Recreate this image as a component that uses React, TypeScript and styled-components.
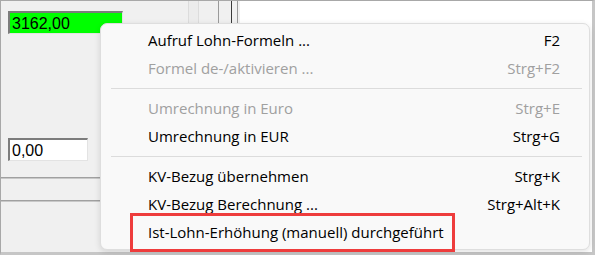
import React from 'react';
import styled, { createGlobalStyle } from 'styled-components';

const GlobalStyle = createGlobalStyle`
  html, body {
    margin: 0;
    padding: 0;
    background: #ffffff;
  }
  body {
    font-family: "Liberation Sans", Arial, sans-serif;
  }
`;

const Frame = styled.div`
  position: relative;
  width: 595px;
  height: 255px;
  box-sizing: border-box;
  border-top: 1px solid #a8a8a8;
  border-left: 1px solid #a8a8a8;
  border-right: 3px solid #c6c6c6;
  border-bottom: 3px solid #c6c6c6;
  display: flex;
  background: #ffffff;
`;

const FormPane = styled.div`
  width: 187px;
  background: #f0f0f0;
  display: flex;
  flex-direction: column;
`;

const Field = styled.div<{ $green?: boolean; $width: number; $top: number }>`
  box-sizing: border-box;
  width: ${(p) => p.$width}px;
  height: 23px;
  margin: ${(p) => p.$top}px 0 0 7px;
  padding: 1px 0 0 2px;
  background: ${(p) => (p.$green ? '#00ff00' : '#ffffff')};
  border-top: 2px solid #7c7c7c;
  border-left: 2px solid #7c7c7c;
  border-right: 1px solid #e3e3e3;
  border-bottom: 1px solid #e3e3e3;
  font-size: 16px;
  line-height: 19px;
  color: #000;
`;

const Rule = styled.div<{ $top: number }>`
  margin-top: ${(p) => p.$top}px;
  border-top: 1px solid #a0a0a0;
  border-bottom: 1px solid #c8c8c8;
`;

const Splitter = styled.div`
  width: 52px;
  display: flex;
  background: #f0f0f0;
`;

const SplitCol = styled.div<{ $w: number; $line?: string; $bg?: string }>`
  width: ${(p) => p.$w}px;
  box-sizing: border-box;
  background: ${(p) => p.$bg || '#f0f0f0'};
  border-left: ${(p) => (p.$line ? `1px solid ${p.$line}` : 'none')};
`;

const Canvas = styled.div`
  flex: 1;
  background: #ffffff;
`;

const Menu = styled.div`
  position: absolute;
  left: 99px;
  top: 22px;
  width: 490px;
  height: 227px;
  box-sizing: border-box;
  padding: 2px 4px;
  background: #f9f9f9;
  border: 1px solid #dedede;
  border-radius: 7px;
  box-shadow: 0 2px 6px rgba(0, 0, 0, 0.12);
  font-family: "Open Sans", "Noto Sans", sans-serif;
  font-size: 15px;
`;

const Item = styled.div<{ $disabled?: boolean }>`
  position: relative;
  height: 28px;
  display: flex;
  align-items: center;
  justify-content: space-between;
  padding: 0 25px 0 43px;
  color: ${(p) => (p.$disabled ? '#a0a0a0' : '#000000')};
  white-space: nowrap;
`;

const Separator = styled.div`
  height: 12px;
  display: flex;
  align-items: center;
  padding: 0 3px 0 6px;
  &::after {
    content: '';
    flex: 1;
    border-top: 1px solid #dcdcdc;
  }
`;

const Highlight = styled.div`
  position: absolute;
  left: 25px;
  top: -5px;
  width: 325px;
  height: 39px;
  box-sizing: border-box;
  border: 3px solid #ee3c3c;
  pointer-events: none;
`;

type Entry =
  | { kind: 'item'; label: string; shortcut?: string; disabled?: boolean; marked?: boolean }
  | { kind: 'sep' };

const entries: Entry[] = [
  { kind: 'item', label: 'Aufruf Lohn-Formeln ...', shortcut: 'F2' },
  { kind: 'item', label: 'Formel de-/aktivieren ...', shortcut: 'Strg+F2', disabled: true },
  { kind: 'sep' },
  { kind: 'item', label: 'Umrechnung in Euro', shortcut: 'Strg+E', disabled: true },
  { kind: 'item', label: 'Umrechnung in EUR', shortcut: 'Strg+G' },
  { kind: 'sep' },
  { kind: 'item', label: 'KV-Bezug übernehmen', shortcut: 'Strg+K' },
  { kind: 'item', label: 'KV-Bezug Berechnung ...', shortcut: 'Strg+Alt+K' },
  { kind: 'item', label: 'Ist-Lohn-Erhöhung (manuell) durchgeführt', marked: true },
];

const App = () => {
  return (
    <>
      <GlobalStyle />
      <Frame>
        <FormPane>
          <Field $green $width={115} $top={10}>
            3162,00
          </Field>
          <Field $width={80} $top={104}>
            0,00
          </Field>
          <Rule $top={16} />
          <Rule $top={21} />
        </FormPane>
        <Splitter>
          <SplitCol $w={10} $line="#dcdcdc" $bg="#ececec" />
          <SplitCol $w={20} $line="#dcdcdc" />
          <SplitCol $w={13} $line="#9a9a9a" />
          <SplitCol $w={6} $line="#3a3a3a" />
          <SplitCol $w={3} $line="#9a9a9a" />
        </Splitter>
        <Canvas />

        <Menu>
          {entries.map((e, i) =>
            e.kind === 'sep' ? (
              <Separator key={i} />
            ) : (
              <Item key={i} $disabled={e.disabled}>
                <span>{e.label}</span>
                <span>{e.shortcut}</span>
                {e.marked && <Highlight />}
              </Item>
            )
          )}
        </Menu>
      </Frame>
    </>
  );
};

export default App;
